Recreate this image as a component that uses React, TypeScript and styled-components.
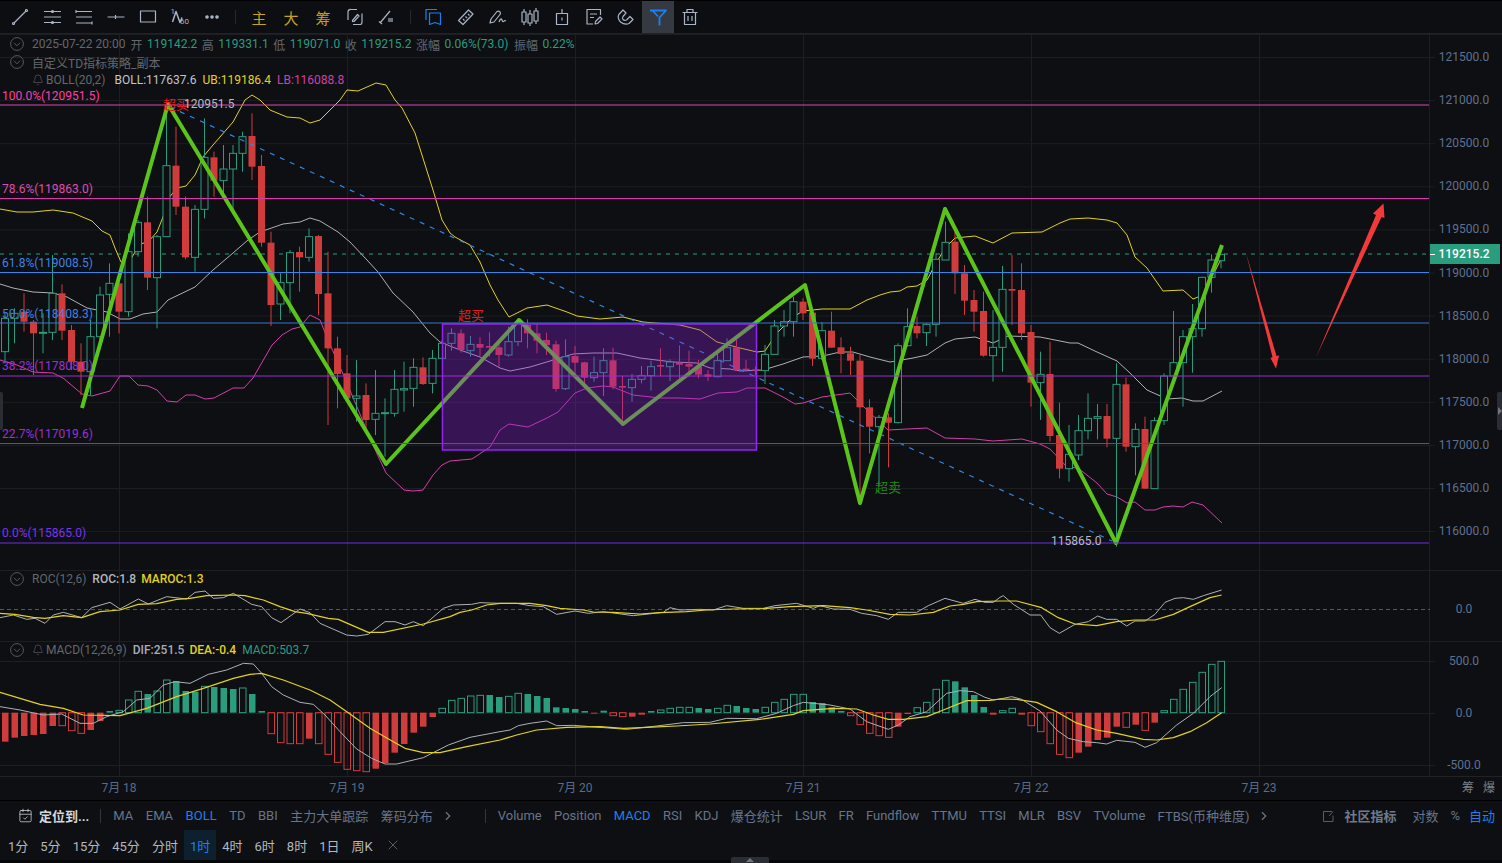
import React from 'react'
import styled, { createGlobalStyle } from 'styled-components'
import { Bell, CalendarCheck, ChevronRight, X } from 'lucide-react'

const BG = '#0d0f12'
const GRID = '#1c1e22'
const AXIS = '#5f7191'
const UP = '#2a9d7f'
const DOWN = '#d03c3c'
const BLUE = '#1e7ff0'
const GOLD = '#c8a21c'
const YELLOW = '#e2d21e'
const WHITE_LINE = '#aeb0b5'
const PINK = '#d23fa8'

const CHART_FONT = `Roboto, "Noto Sans CJK SC", sans-serif`

const GlobalStyle = createGlobalStyle`
  html, body {
    margin: 0;
    background: ${BG};
    font-family: ${CHART_FONT};
  }
`

const Page = styled.div`
  position: relative;
  width: 1502px;
  height: 863px;
  overflow: hidden;
  display: flex;
  flex-direction: column;
  background: ${BG};
`

/* ---------- top toolbar ---------- */

const Toolbar = styled.div`
  height: 34px;
  flex: none;
  box-sizing: border-box;
  border-top: 1px solid #000;
  border-bottom: 1px solid #1f2227;
  padding-left: 4px;
  display: flex;
  align-items: stretch;
  background: #0c0e11;
`

const ToolButton = styled.div<{ $active?: boolean; $blue?: boolean }>`
  width: 32px;
  display: flex;
  align-items: center;
  justify-content: center;
  color: ${p => (p.$active || p.$blue ? BLUE : '#a9b4c4')};
  background: ${p => (p.$active ? '#353941' : 'transparent')};
`

const GoldGlyph = styled(ToolButton)`
  color: ${GOLD};
  font-size: 15px;
  font-family: "Noto Sans CJK SC", sans-serif;
`

const ToolSep = styled.div`
  width: 1px;
  height: 14px;
  align-self: center;
  margin: 0 7px;
  background: #26282c;
`

const ToolSvg = styled.svg.attrs({ viewBox: '0 0 20 20', width: 20, height: 20 })`
  display: block;
  fill: none;
  stroke: currentColor;
  stroke-width: 1.2;
  stroke-linejoin: round;
  text {
    fill: currentColor;
    stroke: none;
    font-family: ${CHART_FONT};
  }
`

const toolIcons = {
  line: (
    <>
      <path d="M4 16 L16 4" />
      <circle cx="3.5" cy="16.5" r="1" />
      <circle cx="16.5" cy="3.5" r="1" />
    </>
  ),
  channel: (
    <>
      <path d="M2 4.5H19M2 10H19M2 15.5H19" />
      <circle cx="10.5" cy="4.5" r="1" fill="currentColor" />
      <circle cx="10.5" cy="15.5" r="1" fill="currentColor" />
    </>
  ),
  lines: (
    <>
      <path d="M2 4.5H18M2 10H18M2 16H18" />
      <path d="M2 3V6M18 14.5V17.5" />
    </>
  ),
  hline: <path d="M1.5 10H18.5M9.5 8V12" />,
  rect: <rect x="2.5" y="4" width="15" height="11" />,
  fib: (
    <>
      <path d="M2.5 15L6 4.5L10 15.5L12 10.5" strokeWidth="1.5" />
      <text x="0.5" y="7" fontSize="8">1</text>
      <text x="10" y="17" fontSize="8">60</text>
    </>
  ),
  more: (
    <>
      <circle cx="5" cy="10" r="1.2" fill="currentColor" />
      <circle cx="10" cy="10" r="1.2" fill="currentColor" />
      <circle cx="15" cy="10" r="1.2" fill="currentColor" />
    </>
  ),
  cycle: (
    <>
      <path d="M12 2.5H5Q3 2.5 3 5V13M5.5 2L3 4" />
      <path d="M8 17.5H15Q17 17.5 17 15V6.5" />
      <path d="M7.5 13.5L12.5 7.5L14 9L9 14.5H7.5Z" />
    </>
  ),
  eraser: (
    <>
      <path d="M3 16L13 4M2 14.5L5 17" />
      <path d="M11 11H16V15H11Z" fill="currentColor" opacity=".6" stroke="none" />
    </>
  ),
  bookmark: (
    <>
      <path d="M2 13V2.5H13" />
      <path d="M5.5 6H16.5V17.5L11 15.5L5.5 17.5Z" />
    </>
  ),
  ruler: (
    <>
      <path d="M2.5 13.5L12.5 3L17 7L7 17.5Z" />
      <path d="M7 12L8.5 13.5M9.5 9.5L11 11M12 7L13.5 8.5" />
    </>
  ),
  pen: (
    <>
      <path d="M2 16L3 12L9 4.5Q10.5 3.5 12 5Q13 6.5 12 7.5L6 15Z" />
      <path d="M11 15Q13 10 14 13Q15 16 16.5 13.5L18 14" />
    </>
  ),
  candles: (
    <>
      <path d="M4 2V18M10 3V19M16 1V17" />
      <rect x="2" y="5" width="4" height="10" fill="#0c0e11" />
      <rect x="8" y="7" width="4" height="9" fill="#0c0e11" />
      <rect x="14" y="4" width="4" height="10" fill="#0c0e11" />
    </>
  ),
  note: (
    <>
      <rect x="4.5" y="6.5" width="11" height="11" />
      <path d="M10 2V6.5M10 10.5V13.5" />
    </>
  ),
  memo: (
    <>
      <path d="M16.5 8V2.5H3V17H9" />
      <path d="M6 7H13M6 10.5H10" />
      <path d="M11 17L11.5 14.5L16 10L18 12L13.5 16.5Z" />
    </>
  ),
  magnet: (
    <path d="M7 3L2.8 7.5Q1 11 4.5 15Q9 18.5 13 16.5L17 12.5L14 9.5L10.5 13Q8.5 14 7 12.5Q5.8 11 7 9.5L10 6Z" />
  ),
  funnel: <path d="M2 3.5H18L11.5 10.5V18.5M10 9.5L4.5 3.5" strokeWidth="1.8" />,
  trash: (
    <>
      <path d="M2.5 5.5H17.5M7 5.5V2.5H13V5.5" />
      <path d="M4.5 5.5V17.5H15.5V5.5M8 9V14M12 9V14" />
    </>
  ),
}

type ToolName = keyof typeof toolIcons

const leftTools: ToolName[] = ['line', 'channel', 'lines', 'hline', 'rect', 'fib', 'more']
const rightTools: ToolName[] = ['ruler', 'pen', 'candles', 'note', 'memo', 'magnet']

const Tool = ({ name, ...rest }: { name: ToolName; $active?: boolean; $blue?: boolean }) => (
  <ToolButton {...rest}>
    <ToolSvg>{toolIcons[name]}</ToolSvg>
  </ToolButton>
)

const TopBar = () => (
  <Toolbar>
    {leftTools.map(t => (
      <Tool key={t} name={t} />
    ))}
    <ToolSep />
    <GoldGlyph>主</GoldGlyph>
    <GoldGlyph>大</GoldGlyph>
    <GoldGlyph>筹</GoldGlyph>
    <Tool name="cycle" />
    <Tool name="eraser" />
    <ToolSep />
    <Tool name="bookmark" $blue />
    {rightTools.map(t => (
      <Tool key={t} name={t} />
    ))}
    <Tool name="funnel" $active />
    <Tool name="trash" />
  </Toolbar>
)

/* ---------- chart data, read off the picture in chart pixels ---------- */

const candleX = (i: number) => 5 + 9.5 * i

type Row = [string, number, number, number, number]

// rows are wick top, body top, body bottom, wick bottom at 3x from a crop starting at y0
const rows = (y0: number, list: Row[]) =>
  list.map(([c, wt, bt, bb, wb]) => ({
    up: c === 'g',
    wt: y0 + wt / 3,
    bt: y0 + bt / 3,
    bb: y0 + bb / 3,
    wb: y0 + wb / 3,
  }))

const candles = [
  ...rows(100, [
    ['g', 640, 655, 755, 790], ['g', 625, 640, 655, 730], ['r', 580, 635, 665, 695], ['r', 660, 665, 700, 825],
    ['g', 640, 697, 700, 760], ['g', 465, 580, 697, 720], ['r', 553, 580, 692, 720], ['r', 675, 690, 785, 810],
    ['r', 730, 785, 815, 885], ['g', 660, 710, 815, 885], ['g', 560, 585, 710, 730], ['g', 490, 550, 583, 710],
    ['r', 520, 550, 635, 700], ['g', 400, 455, 635, 650], ['g', 360, 367, 455, 470], ['r', 290, 367, 533, 570],
    ['g', 405, 410, 533, 685], ['g', 20, 197, 410, 410], ['r', 80, 197, 320, 345], ['r', 290, 320, 472, 478],
    ['g', 315, 328, 472, 515], ['g', 55, 172, 328, 355], ['r', 155, 172, 242, 290], ['g', 135, 207, 242, 285],
    ['g', 135, 160, 207, 335], ['g', 95, 110, 160, 215], ['r', 40, 108, 200, 240], ['r', 165, 198, 428, 440],
    ['r', 395, 428, 615, 678], ['g', 520, 548, 612, 660], ['g', 450, 458, 548, 640], ['r', 440, 456, 472, 575],
    ['g', 385, 410, 472, 485], ['r', 405, 408, 582, 645], ['r', 455, 580, 745, 975], ['r', 710, 745, 822, 925],
    ['r', 765, 820, 895, 900], ['g', 780, 888, 895, 965], ['r', 850, 885, 960, 985], ['g', 810, 940, 958, 1005],
    ['g', 895, 938, 941, 1070], ['g', 810, 868, 940, 950], ['g', 785, 866, 870, 935], ['g', 775, 802, 865, 920],
    ['r', 772, 802, 852, 855], ['g', 750, 775, 850, 880], ['g', 720, 730, 775, 775],
  ]),
  ...rows(300, [
    ['g', 85, 100, 130, 152], ['r', 88, 100, 150, 158], ['g', 108, 133, 152, 170], ['r', 112, 132, 143, 168],
    ['r', 97, 138, 143, 170], ['r', 130, 142, 165, 200], ['g', 80, 125, 165, 170], ['g', 55, 68, 125, 138],
    ['r', 58, 75, 100, 145], ['r', 72, 100, 122, 160], ['r', 98, 120, 135, 165], ['r', 122, 133, 267, 275],
    ['g', 118, 170, 266, 270], ['r', 138, 168, 188, 225], ['r', 185, 187, 233, 250], ['g', 170, 218, 233, 245],
    ['g', 145, 182, 218, 288], ['r', 143, 181, 260, 268], ['r', 228, 258, 263, 370], ['g', 222, 238, 263, 305],
    ['g', 198, 227, 238, 250], ['g', 182, 200, 227, 272], ['r', 145, 195, 200, 228], ['g', 178, 186, 200, 243],
    ['r', 136, 188, 194, 235], ['r', 152, 192, 200, 230], ['r', 180, 200, 224, 235], ['r', 210, 223, 230, 243],
    ['g', 150, 182, 230, 232], ['g', 115, 143, 182, 182], ['r', 120, 142, 210, 213], ['r', 180, 206, 210, 213],
    ['r', 200, 208, 212, 225], ['g', 135, 163, 212, 252], ['g', 60, 78, 163, 165], ['g', 30, 65, 78, 110],
    ['g', -10, 5, 65, 110], ['r', -5, 5, 40, 60], ['r', 30, 38, 176, 198], ['g', 66, 92, 175, 180],
    ['r', 35, 92, 143, 143], ['r', 112, 142, 162, 220], ['r', 140, 160, 182, 225], ['r', 165, 182, 322, 600],
    ['r', 298, 322, 380, 460], ['g', 345, 352, 380, 560],
  ]),
  ...rows(200, [
    ['r', 640, 652, 668, 802], ['g', 430, 437, 668, 670], ['g', 325, 380, 437, 440], ['r', 350, 378, 400, 415],
    ['g', 370, 373, 398, 438], ['g', 160, 178, 373, 410], ['g', 65, 127, 180, 180], ['r', 95, 125, 220, 282],
    ['r', 195, 220, 302, 345], ['r', 270, 300, 335, 395], ['r', 275, 333, 467, 470], ['g', 330, 442, 467, 545],
    ['g', 198, 268, 442, 515], ['r', 165, 267, 272, 375], ['r', 190, 270, 400, 420], ['r', 375, 396, 548, 620],
    ['g', 455, 523, 548, 660], ['r', 425, 522, 708, 725], ['r', 608, 705, 806, 835], ['g', 675, 763, 806, 845],
    ['g', 645, 692, 765, 780], ['g', 580, 655, 692, 718], ['g', 612, 650, 655, 718], ['r', 612, 648, 716, 742],
    ['g', 490, 553, 715, 1040], ['r', 533, 553, 740, 755], ['g', 670, 688, 740, 826], ['r', 650, 687, 866, 866],
    ['g', 652, 662, 866, 866], ['g', 520, 528, 662, 675], ['g', 333, 488, 528, 530], ['g', 390, 410, 488, 620],
    ['g', 312, 386, 410, 518], ['g', 230, 232, 386, 410], ['g', 163, 180, 232, 278], ['g', 163, 163, 182, 205],
  ]),
]

const upperBand =
  '0,209 17,212 33,212 53,210 73,213 92,221 102,231 110,235 115,248 121,262 129,262 140,244 148,242 157,232 163,217 167,200 177,188 186,186 195,175 203,157 213,145 233,122 245,100 252,95 260,100 270,110 287,117 300,118 310,123 320,120 340,100 347,90 358,91 376,83 386,85 395,100 402,108 415,133 433,190 442,220 450,233 455,237 470,245 480,262 490,285 498,300 509,317 527,308 547,305 567,312 577,316 600,319 623,317 643,322 680,325 700,330 717,342 740,348 757,352 765,351 777,333 793,317 803,311 822,309 850,309 867,300 880,295 890,292 900,291 907,287 917,286 927,280 935,265 945,248 955,238 975,236 993,243 1012,233 1042,232 1060,223 1070,219 1088,218 1107,220 1117,223 1127,235 1135,257 1147,268 1163,291 1183,290 1193,299 1203,295 1213,275 1222,257'
const middleBand =
  '0,284 13,288 33,292 53,293 67,297 87,308 107,312 120,319 130,319 143,314 157,312 168,300 195,287 213,270 233,253 248,240 260,232 283,224 300,222 310,218 320,221 338,232 350,242 367,260 378,272 393,293 413,312 430,333 440,342 460,350 480,357 500,368 510,371 530,367 550,361 573,354 593,353 617,353 640,358 673,362 697,363 710,368 730,369 740,371 763,370 783,364 803,357 823,356 840,352 853,352 870,357 890,362 913,358 927,355 945,343 955,339 975,337 993,343 1008,336 1040,337 1070,343 1078,343 1097,352 1117,361 1130,373 1147,390 1167,399 1182,398 1193,401 1203,401 1222,391'
const lowerBand =
  '0,360 17,365 33,372 53,373 63,378 82,394 92,396 110,391 120,376 129,376 138,385 148,386 157,390 167,401 177,402 186,395 195,395 205,399 214,398 233,388 244,388 253,378 272,345 282,335 292,329 300,327 310,315 320,320 328,340 340,367 357,407 372,443 386,473 404,490 413,491 423,490 433,475 442,465 450,461 472,459 490,447 500,430 509,424 528,427 547,418 558,412 575,393 587,388 603,386 613,387 633,395 660,398 680,398 700,399 718,393 737,392 747,388 765,388 783,397 795,404 803,403 822,397 850,393 867,410 888,430 907,429 927,428 945,438 975,439 993,441 1022,439 1040,444 1050,449 1067,467 1078,468 1097,483 1107,494 1117,497 1127,503 1135,502 1145,510 1155,510 1163,507 1173,506 1183,507 1192,502 1203,505 1222,523'
const zigzag = '82,408 168,104 386,464 519,320 623,424 805,285 860,503 945,209 1116,543 1222,245'

// crop x/y at 3x -> chart px; the lower panes were read from three crops at y 565
const crop = (x0: number, pts: number[]) => {
  const out: string[] = []
  for (let i = 0; i < pts.length; i += 2) out.push(`${x0 + pts[i] / 3},${565 + pts[i + 1] / 3}`)
  return out.join(' ')
}

const rocLine = [
  crop(0, [0,158,40,150,80,163,105,160,135,175,160,150,190,142,245,158,275,128,330,112,360,132,415,102,445,117,500,95,560,102,585,82,615,78,640,100,670,98,700,85,755,118,785,125,815,158,843,173,900,132,930,143,960,175,1040,210,1070,213,1105,208,1155,170,1185,170,1215,180,1240,170,1270,182,1330,130,1360,120,1415,118,1440,113,1500,115]),
  crop(500, [50,115,90,122,130,125,170,148,225,138,265,145,310,140,400,152,490,142,510,128,540,135,600,133,640,135,680,122,730,130,790,130,825,122,890,115,940,130,960,122,1000,132,1050,133,1085,145,1130,152,1165,163,1195,142,1250,142,1285,122,1335,100,1390,115,1425,103,1455,112,1480,112,1500,97]),
  crop(1000, [10,92,40,118,90,150,122,150,150,188,178,205,225,178,265,170,293,153,320,163,350,163,380,183,405,168,435,168,465,148,495,112,525,100,550,98,580,103,610,92,665,75]),
].join(' ')
const rocAverage = [
  crop(0, [0,145,45,148,100,157,135,160,190,152,245,158,300,140,360,135,415,118,470,116,530,103,570,100,620,92,700,90,735,92,790,105,840,125,885,140,920,145,985,160,1015,163,1105,202,1150,202,1270,177,1350,155,1380,142,1415,135,1460,120,1500,115]),
  crop(500, [90,115,140,122,180,130,250,135,280,141,340,142,420,147,480,143,560,140,620,135,700,132,790,131,870,125,970,122,1050,128,1100,135,1170,148,1230,150,1300,142,1350,123,1390,118,1430,110,1500,108]),
  crop(1000, [50,108,125,128,175,158,225,177,290,182,350,170,405,165,465,165,520,148,570,125,630,98,665,90]),
].join(' ')
const difLine = [
  crop(0, [0,425,60,435,130,450,185,447,240,475,280,475,320,455,370,440,410,405,450,400,490,360,525,350,570,355,625,328,680,315,730,295,760,297,785,325,815,365,850,390,900,412,940,418,975,450,1020,500,1070,552,1115,580,1155,597,1190,597,1270,578,1345,540,1410,517,1500,500]),
  crop(500, [30,495,55,482,90,475,140,468,170,482,220,481,300,487,380,493,470,483,550,473,630,472,680,460,770,461,830,445,880,422,910,412,940,415,990,420,1050,432,1100,470,1165,493,1195,480,1230,455,1280,440,1340,385,1380,377,1420,380,1455,397,1480,405,1500,402]),
  crop(1000, [35,395,65,403,120,438,170,495,205,520,250,530,290,533,320,537,350,526,405,532,435,547,470,533,530,480,580,445,630,395,665,368]),
].join(' ')
const deaLine = [
  crop(0, [0,382,60,400,120,418,190,430,250,450,360,452,440,430,530,395,610,370,700,340,750,328,785,325,850,345,930,375,990,405,1050,447,1110,490,1180,530,1215,550,1270,563,1320,563,1400,545,1500,525]),
  crop(500, [50,510,110,495,200,487,300,485,370,490,440,487,530,483,630,477,780,463,880,448,910,437,1000,430,1070,432,1120,450,1165,463,1210,463,1280,455,1330,435,1400,407,1470,406,1500,402]),
  crop(1000, [50,403,110,412,170,440,225,472,290,495,350,505,430,523,470,525,520,518,570,500,620,473,665,443]),
].join(' ')

// bar end at 3x from y 565, the zero line is 443; a negative number marks a hollow bar
const macdBars = [
  530, 518, 513, 510, 507, 483, -482, -497, -505, 495, 468, 438, -436, -405, -379, 387, -378, -345, 348, 378, 380,
  -364, 366, 369, 372, -369, 387, 438, -506, -533, -536, -536, 521, -536, -568, -592, -613, -617, -620, 611, 594,
  563, 537, 503, 485, 456, -430, -406, -400, -393, -391, 390, 396, -394, -385, 387, 393, 399, 427, 429, 432, 438,
  446, 437, -452, -455, 455, 449, 438, -435, -430, -427, -427, 429, 432, -430, -421, 423, 429, 432, -427, -412,
  -403, -388, -388, 411, 414, 427, 438, -452, -479, -505, -512, -517, 485, 447, -428, -412, -373, -346, 349, 367,
  390, 426, 449, -437, -430, 449, -482, -500, -536, -568, -578, 563, 545, 525, 518, 485, -487, 479, -496, 473,
  -437, -403, -373, -352, -322, -298, -289,
]

const gridXs = [119, 347, 575, 803, 1031, 1259, 1429]
const priceTicks = ['121500.0', '121000.0', '120500.0', '120000.0', '119500.0', '119000.0', '118500.0', '118000.0', '117500.0', '117000.0', '116500.0', '116000.0']
const fibLevels = [
  { y: 105, labelY: 100, text: '100.0%(120951.5)', line: '#d94ab6', color: '#ff3fb0' },
  { y: 198.5, labelY: 193, text: '78.6%(119863.0)', line: '#e033b4', color: '#e04ab0' },
  { y: 272.5, labelY: 267, text: '61.8%(119008.5)', line: '#3d82e6', color: '#3d82e6' },
  { y: 323, labelY: 318, text: '50.0%(118408.3)', line: '#3d76cc', color: '#3d82e6' },
  { y: 376, labelY: 370, text: '38.2%(117808.0)', line: '#9b2fcf', color: '#9b30d8' },
  { y: 443.5, labelY: 438, text: '22.7%(117019.6)', line: '#9326d6', color: '#9b30d8' },
  { y: 543, labelY: 537, text: '0.0%(115865.0)', line: '#6f2ce8', color: '#7a35f0' },
]
const timeLabels = ['7月 18', '7月 19', '7月 20', '7月 21', '7月 22', '7月 23']

/* ---------- chart panes ---------- */

const PaneBox = styled.div<{ $height: number }>`
  position: relative;
  flex: none;
  height: ${p => p.$height}px;
  border-top: 1px solid ${GRID};
  box-sizing: border-box;
`

const PaneSvg = styled.svg`
  display: block;
  font-family: ${CHART_FONT};
`

const Legend = styled.div`
  position: absolute;
  left: 10px;
  top: 0;
  display: flex;
  flex-direction: column;
  pointer-events: none;
`

const LegendRow = styled.div<{ $top?: number; $gap?: number; $indent?: number }>`
  height: 18px;
  margin-top: ${p => p.$top ?? 0}px;
  padding-left: ${p => p.$indent ?? 0}px;
  display: flex;
  align-items: center;
  gap: ${p => p.$gap ?? 6}px;
  font-size: 12px;
  color: #63676f;
  white-space: nowrap;
`

const Stamp = styled.span`
  margin: 0 0.5px 0 1.5px;
`

const Value = styled.span<{ $color?: string; $strong?: boolean; $left?: number }>`
  color: ${p => p.$color ?? '#a3a7ae'};
  font-weight: ${p => (p.$strong ? 500 : 400)};
  margin-left: ${p => p.$left ?? 0}px;
`

const Caption = styled.span<{ $left?: number }>`
  margin-left: ${p => p.$left ?? 0}px;
`

const FoldIcon = styled.svg.attrs({ viewBox: '0 0 14 14', width: 14, height: 14 })`
  flex: none;
  fill: none;
  stroke: #565a61;
  stroke-width: 1;
  margin-right: 2px;
`

const Fold = () => (
  <FoldIcon>
    <circle cx="7" cy="7" r="6.4" />
    <path d="M4 5.8L7 8.8L10 5.8" />
  </FoldIcon>
)

const BellSlot = styled.span`
  display: inline-flex;
  color: #63676f;
  margin-right: -4px;
`

const AxisText = styled.text`
  fill: ${AXIS};
  font-size: 12px;
  text-anchor: middle;
`

const LastPrice = styled(AxisText)`
  fill: #fff;
  font-weight: 500;
`

const ChartLabel = styled.text<{ $color: string }>`
  fill: ${p => p.$color};
  font-size: 12px;
`

const HanMark = styled.text<{ $color: string }>`
  fill: ${p => p.$color};
  font-size: 13px;
  font-family: "Noto Sans CJK SC", sans-serif;
`

const Curve = styled.polyline<{ $color: string; $width?: number }>`
  fill: none;
  stroke: ${p => p.$color};
  stroke-width: ${p => p.$width ?? 1};
  stroke-linejoin: round;
`

const VerticalGrid = ({ top, bottom }: { top: number; bottom: number }) => (
  <>
    {gridXs.map(x => (
      <line key={x} x1={x + 0.5} x2={x + 0.5} y1={top} y2={bottom} stroke={GRID} />
    ))}
  </>
)

const HorizontalGrid = ({ y }: { y: number }) => <line x1={0} x2={1435} y1={y} y2={y} stroke={GRID} />

const MainPane = () => (
  <PaneBox $height={536}>
    <PaneSvg width={1502} height={535} viewBox="0 35 1502 535">
      <VerticalGrid top={35} bottom={570} />
      {priceTicks.map((t, i) => {
        const y = 57 + i * 43.1
        return (
          <g key={t}>
            <HorizontalGrid y={y + 0.5} />
            <AxisText x={1464} y={y + 4}>{t}</AxisText>
          </g>
        )
      })}

      <line x1={0} x2={1430} y1={254} y2={254} stroke={UP} strokeDasharray="4 5" />

      <Curve points={upperBand} $color={YELLOW} />
      <Curve points={middleBand} $color={WHITE_LINE} />
      <Curve points={lowerBand} $color={PINK} />

      {candles.map((c, i) => {
        const x = candleX(i)
        const color = c.up ? UP : DOWN
        return (
          <g key={i}>
            <line x1={x} x2={x} y1={c.wt} y2={c.wb} stroke={color} />
            <rect
              x={x - 3.5}
              y={c.bt}
              width={7}
              height={Math.max(c.bb - c.bt, 1)}
              fill={c.up ? BG : color}
              stroke={c.up ? color : 'none'}
            />
          </g>
        )
      })}

      <line x1={170} y1={107} x2={1112} y2={541} stroke="#2f86e6" strokeWidth={1.2} strokeDasharray="5 6" />
      <Curve points={zigzag} $color="#5bc41a" $width={4} />

      <rect x={442.5} y={324} width={314} height={126} fill="rgba(144,32,220,0.33)" stroke="#9225f0" strokeWidth={1.5} />

      {fibLevels.map(f => (
        <g key={f.text}>
          <line x1={0} x2={1429} y1={f.y} y2={f.y} stroke={f.line} />
          <ChartLabel x={2} y={f.labelY} $color={f.color}>{f.text}</ChartLabel>
        </g>
      ))}

      <HanMark x={163} y={109} $color="#e51c1c">超买</HanMark>
      <ChartLabel x={184} y={108} $color="#b7bbc3">120951.5</ChartLabel>
      <HanMark x={458} y={320} $color="#e51c1c">超买</HanMark>
      <HanMark x={875} y={492} $color="#1f8a10">超卖</HanMark>
      <ChartLabel x={1051} y={545} $color="#b7bbc3">115865.0</ChartLabel>

      <path d="M1245.7 252L1272.5 357L1270.5 358L1276 368.5L1279 355.5L1276.5 356Z" fill="#f23a3a" />
      <path d="M1315.7 358L1376 215L1373 213.5L1383.5 203.5L1384.5 218L1381.5 217Z" fill="#f23a3a" />

      <rect x={1430} y={244} width={70} height={20} fill={UP} />
      <line x1={1430} x2={1435} y1={254.5} y2={254.5} stroke="#fff" />
      <LastPrice x={1464} y={258}>119215.2</LastPrice>
    </PaneSvg>
    <Legend>
      <LegendRow $gap={4.5}>
        <Fold />
        <Stamp>2025-07-22 20:00</Stamp>
        <span>开</span>
        <Value $color={UP}>119142.2</Value>
        <span>高</span>
        <Value $color={UP}>119331.1</Value>
        <span>低</span>
        <Value $color={UP}>119071.0</Value>
        <span>收</span>
        <Value $color={UP}>119215.2</Value>
        <span>涨幅</span>
        <Value $color={UP}>0.06%(73.0)</Value>
        <Caption $left={1}>振幅</Caption>
        <Value $color={UP}>0.22%</Value>
      </LegendRow>
      <LegendRow>
        <Fold />
        <span>自定义TD指标策略_副本</span>
      </LegendRow>
      <LegendRow $indent={22}>
        <BellSlot>
          <Bell size={12} strokeWidth={1.2} />
        </BellSlot>
        <span>BOLL(20,2)</span>
        <Value $color="#c2c5cb" $left={3}>BOLL:117637.6</Value>
        <Value $color={YELLOW}>UB:119186.4</Value>
        <Value $color={PINK}>LB:116088.8</Value>
      </LegendRow>
    </Legend>
  </PaneBox>
)

const RocPane = () => (
  <PaneBox $height={71}>
    <PaneSvg width={1502} height={70} viewBox="0 571 1502 70">
      <VerticalGrid top={571} bottom={641} />
      <line x1={0} x2={1430} y1={609.5} y2={609.5} stroke="#55585e" strokeDasharray="4 3" />
      <Curve points={rocLine} $color={WHITE_LINE} />
      <Curve points={rocAverage} $color={YELLOW} $width={1.2} />
      <AxisText x={1464} y={612.5}>0.0</AxisText>
    </PaneSvg>
    <Legend>
      <LegendRow $top={-1}>
        <Fold />
        <span>ROC(12,6)</span>
        <Value $color="#b4b7bd" $strong>ROC:1.8</Value>
        <Value $color={YELLOW} $strong $left={-1}>MAROC:1.3</Value>
      </LegendRow>
    </Legend>
  </PaneBox>
)

const MacdPane = () => (
  <PaneBox $height={135}>
    <PaneSvg width={1502} height={134} viewBox="0 642 1502 134">
      <VerticalGrid top={642} bottom={776} />
      <HorizontalGrid y={661.5} />
      <HorizontalGrid y={713.5} />
      <HorizontalGrid y={765.5} />
      <AxisText x={1464} y={665}>500.0</AxisText>
      <AxisText x={1464} y={717}>0.0</AxisText>
      <AxisText x={1464} y={769}>-500.0</AxisText>

      {macdBars.map((v, i) => {
        const end = 565 + Math.abs(v) / 3
        const zero = 565 + 443 / 3
        const color = end < zero ? UP : DOWN
        const hollow = v < 0
        return (
          <rect
            key={i}
            x={candleX(i) - 3}
            y={Math.min(end, zero)}
            width={6.5}
            height={Math.max(Math.abs(end - zero), 1)}
            fill={hollow ? 'none' : color}
            stroke={hollow ? color : 'none'}
          />
        )
      })}

      <Curve points={difLine} $color={WHITE_LINE} />
      <Curve points={deaLine} $color={YELLOW} $width={1.2} />
    </PaneSvg>
    <Legend>
      <LegendRow $top={-1}>
        <Fold />
        <BellSlot>
          <Bell size={12} strokeWidth={1.2} />
        </BellSlot>
        <span>MACD(12,26,9)</span>
        <Value $color="#a9adb4" $strong>DIF:251.5</Value>
        <Value $color={YELLOW} $strong $left={-1}>DEA:-0.4</Value>
        <Value $color={UP}>MACD:503.7</Value>
      </LegendRow>
    </Legend>
  </PaneBox>
)

/* ---------- time axis ---------- */

const TimeAxisRow = styled.div`
  height: 24px;
  flex: none;
  box-sizing: border-box;
  border-top: 1px solid #202226;
  display: flex;
  align-items: center;
  padding: 0 0 5px 5px;
  color: #5b6b85;
  font-size: 12px;
`

const TimeLabel = styled.span`
  width: 228px;
  flex: none;
  text-align: center;
`

const AxisMarks = styled.div`
  margin-left: auto;
  margin-right: 7px;
  display: flex;
  gap: 9px;
  color: #7c8088;
`

/* ---------- indicator and period bars ---------- */

const IndicatorBar = styled.div`
  height: 30px;
  flex: none;
  box-sizing: border-box;
  border-top: 1px solid #000;
  padding: 0 7px 0 18px;
  display: flex;
  align-items: center;
  gap: 12px;
  font-size: 13px;
  color: #67748a;
  white-space: nowrap;
`

const TabGroup = styled.div<{ $gap: number }>`
  display: flex;
  align-items: center;
  gap: ${p => p.$gap}px;
`

const Tab = styled.span<{ $active?: boolean }>`
  color: ${p => (p.$active ? BLUE : 'inherit')};
`

const AutoTab = styled(Tab)`
  margin-left: -3px;
`

const LocateBox = styled.div`
  display: flex;
  align-items: center;
  gap: 6px;
  margin-right: -1px;
  color: #d4d7dc;
  font-weight: 700;
`

const BarSep = styled.span<{ $left?: number }>`
  width: 1px;
  height: 14px;
  margin-left: ${p => p.$left ?? 0}px;
  background: #33363c;
`

const Chevron = styled(ChevronRight)`
  color: #6f7684;
  margin-left: -4px;
`

const BarRight = styled.div`
  margin-left: auto;
  display: flex;
  align-items: center;
  gap: 12px;
`

const Community = styled.span`
  font-weight: 700;
  color: #6f7a8c;
  margin: 0 4px 0 -3px;
`

const ExportIcon = styled.svg.attrs({ viewBox: '0 0 14 14', width: 14, height: 14 })`
  fill: none;
  stroke: #565c68;
  stroke-width: 1;
  display: block;
`

const PeriodBar = styled.div`
  height: 33px;
  flex: none;
  box-sizing: border-box;
  border-bottom: 3px solid #050607;
  padding-left: 2px;
  display: flex;
  align-items: stretch;
  font-size: 13px;
  color: #b4b7bd;
`

const Period = styled.span<{ $active?: boolean }>`
  display: flex;
  align-items: center;
  padding: 0 6px;
  color: ${p => (p.$active ? BLUE : 'inherit')};
  background: ${p => (p.$active ? '#0e1f2e' : 'transparent')};
`

const CloseSlot = styled.span`
  display: flex;
  align-items: center;
  margin-left: 6px;
  color: #6d7078;
`

/* ---------- little handles on the page edges ---------- */

const EdgeHandle = styled.div`
  position: absolute;
  top: 392px;
  width: 5px;
  height: 38px;
  background: #2a2d33;
`

const LeftHandle = styled(EdgeHandle)`
  left: 0;
  width: 3px;
  border-radius: 0 2px 2px 0;
`

const RightHandle = styled(EdgeHandle)`
  right: 0;
  border-radius: 2px 0 0 2px;
  &::after {
    content: '';
    position: absolute;
    left: 1px;
    top: 15px;
    border: 4px solid transparent;
    border-left-color: #71757d;
  }
`

const BottomHandle = styled.div`
  position: absolute;
  left: 731px;
  bottom: 0;
  width: 38px;
  height: 6px;
  background: #2a2d33;
  border-radius: 2px 2px 0 0;
  &::after {
    content: '';
    position: absolute;
    left: 15px;
    top: -3px;
    border: 4px solid transparent;
    border-bottom-color: #71757d;
  }
`

const firstTabs = ['MA', 'EMA', 'BOLL', 'TD', 'BBI', '主力大单跟踪', '筹码分布']
const secondTabs = ['Volume', 'Position', 'MACD', 'RSI', 'KDJ', '爆仓统计', 'LSUR', 'FR', 'Fundflow', 'TTMU', 'TTSI', 'MLR', 'BSV', 'TVolume', 'FTBS(币种维度)']
const periods = ['1分', '5分', '15分', '45分', '分时', '1时', '4时', '6时', '8时', '1日', '周K']

const App: React.FC = () => (
  <>
    <GlobalStyle />
    <Page>
      <TopBar />
      <MainPane />
      <RocPane />
      <MacdPane />
      <TimeAxisRow>
        {timeLabels.map(t => (
          <TimeLabel key={t}>{t}</TimeLabel>
        ))}
        <AxisMarks>
          <span>筹</span>
          <span>爆</span>
        </AxisMarks>
      </TimeAxisRow>
      <IndicatorBar>
        <LocateBox>
          <CalendarCheck size={15} strokeWidth={1.2} />
          定位到...
        </LocateBox>
        <BarSep />
        <TabGroup $gap={12.5}>
          {firstTabs.map(t => (
            <Tab key={t} $active={t === 'BOLL'}>{t}</Tab>
          ))}
        </TabGroup>
        <Chevron size={14} />
        <BarSep $left={18} />
        <TabGroup $gap={12.3}>
          {secondTabs.map(t => (
            <Tab key={t} $active={t === 'MACD'}>{t}</Tab>
          ))}
        </TabGroup>
        <Chevron size={14} />
        <BarRight>
          <ExportIcon>
            <path d="M11 2.5H2.5V12.5H12V6.5M8 7L12 2.5" />
          </ExportIcon>
          <Community>社区指标</Community>
          <span>对数</span>
          <span>%</span>
          <AutoTab $active>自动</AutoTab>
        </BarRight>
      </IndicatorBar>
      <PeriodBar>
        {periods.map(p => (
          <Period key={p} $active={p === '1时'}>{p}</Period>
        ))}
        <CloseSlot>
          <X size={16} strokeWidth={1.2} />
        </CloseSlot>
      </PeriodBar>
      <LeftHandle />
      <RightHandle />
      <BottomHandle />
    </Page>
  </>
)

export default App
